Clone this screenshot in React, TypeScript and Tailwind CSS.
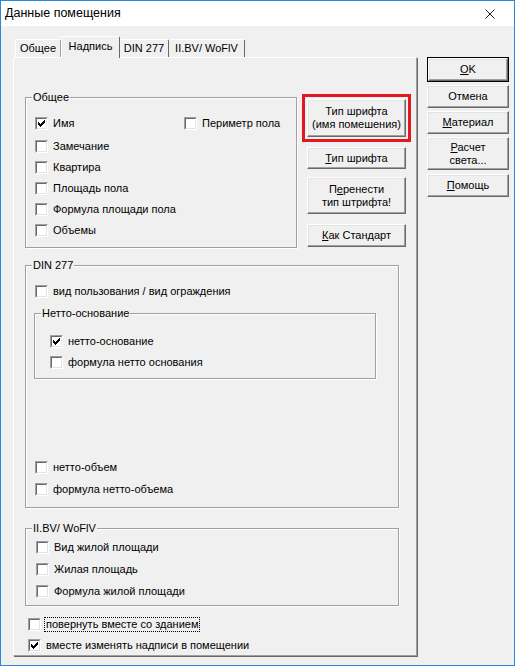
import React from "react";

// classic 3D bevels
const raised =
  "border border-t-white border-l-white border-r-[#696969] border-b-[#696969] shadow-[inset_-1px_-1px_0_#a0a0a0,inset_1px_1px_0_#e3e3e3] bg-[#f0f0f0]";

const CHECK_COLS = [5, 6, 7, 6, 5, 4, 3];

function Check({ on }: { on?: boolean }) {
  return (
    <span className="inline-block w-[13px] h-[13px] shrink-0 border border-t-[#a0a0a0] border-l-[#a0a0a0] border-r-white border-b-white">
      <span className="block w-full h-full bg-white border border-t-[#696969] border-l-[#696969] border-r-[#e3e3e3] border-b-[#e3e3e3]">
        {on && (
          <svg width="9" height="9" viewBox="2 2 9 9" shapeRendering="crispEdges" className="block">
            {CHECK_COLS.map((y, i) => (
              <rect key={i} x={3 + i} y={y} width="1" height="3" fill="#000" />
            ))}
          </svg>
        )}
      </span>
    </span>
  );
}

function Row({
  label,
  on,
  h = "h-[21px]",
  focus,
  className = "",
}: {
  label: string;
  on?: boolean;
  h?: string;
  focus?: boolean;
  className?: string;
}) {
  return (
    <div className={`flex items-center ${h} ${className}`}>
      <Check on={on} />
      {focus ? (
        <span className="ml-[4px] px-[1px] leading-[13px] outline outline-1 outline-dotted outline-black">
          {label}
        </span>
      ) : (
        <span className="ml-[5px] leading-[13px]">{label}</span>
      )}
    </div>
  );
}

function Group({
  title,
  className,
  children,
}: {
  title: string;
  className: string;
  children: React.ReactNode;
}) {
  return (
    <div
      className={`relative border border-[#a0a0a0] shadow-[inset_1px_1px_0_#fff,1px_1px_0_#fff] ${className}`}
    >
      <span className="absolute left-[6px] top-[-7px] px-[1px] leading-[13px] bg-[#f0f0f0]">
        {title}
      </span>
      {children}
    </div>
  );
}

function Btn({
  className = "",
  children,
}: {
  className?: string;
  children: React.ReactNode;
}) {
  return (
    <div
      className={`${raised} flex flex-col items-center justify-center text-center leading-[13px] ${className}`}
    >
      {children}
    </div>
  );
}

export default function App() {
  return (
    <div className="w-[515px] h-[666px] flex flex-col border border-[#2b88d8] bg-[#f0f0f0] text-black text-[11px] font-['Liberation_Sans',Arial,sans-serif] overflow-hidden">
      {/* title bar */}
      <div className="h-[25px] bg-white flex items-center justify-between pl-[4px] pr-[19px]">
        <span className="text-[12.5px]">Данные помещения</span>
        <svg width="10" height="10" viewBox="0 0 10 10" className="block">
          <path d="M0.5 0.5L9.5 9.5M9.5 0.5L0.5 9.5" stroke="#222" strokeWidth="1" />
        </svg>
      </div>

      <div className="flex pl-[12px] pt-[10px]">
        {/* tabs + panel */}
        <div className="w-[405px] flex flex-col">
          <div className="h-[21px] flex items-end pl-[2px]">
            <div className="w-[46px] h-[18px] flex items-center justify-center border-t border-l border-white border-r border-r-[#a0a0a0] rounded-t-[2px]">
              Общее
            </div>
            <div className="relative z-10 w-[59px] h-[22px] mb-[-1px] pb-[3px] flex items-center justify-center bg-[#f0f0f0] border-t border-l border-white border-r border-r-[#696969] rounded-t-[2px]">
              Надпись
            </div>
            <div className="w-[49px] h-[18px] flex items-center justify-center border-t border-white border-r border-r-[#696969] rounded-t-[2px]">
              DIN 277
            </div>
            <div className="w-[76px] h-[18px] flex items-center justify-center border-t border-white border-r border-r-[#696969] rounded-t-[2px]">
              II.BV/ WoFlV
            </div>
          </div>

          <div className="w-[404px] h-[599px] flex flex-col pl-[11px] pt-[36px] border-t border-l border-white border-r border-b border-r-[#a0a0a0] border-b-[#a0a0a0] shadow-[1px_1px_0_0_#696969] overflow-hidden">
            {/* row 1 */}
            <div className="flex items-start">
              <Group title="Общее" className="w-[272px] h-[151px] mt-[3px] pl-[9px] pt-[15px]">
                <div className="flex items-center h-[21px] mb-[2px]">
                  <div className="w-[149px]">
                    <Row label="Имя" on />
                  </div>
                  <Row label="Периметр пола" />
                </div>
                <Row label="Замечание" />
                <Row label="Квартира" />
                <Row label="Площадь пола" />
                <Row label="Формула площади пола" />
                <Row label="Объемы" />
              </Group>

              <div className="ml-[5px] flex flex-col">
                <div className="w-[109px] border-[3px] border-[#e1191f] p-[2px]">
                  <Btn className="h-[38px]">
                    <span>Тип шрифта</span>
                    <span>(имя помешения)</span>
                  </Btn>
                </div>
                <Btn className="ml-[5px] w-[99px] h-[22px] mt-[5px]">
                  <span>
                    <u>Т</u>ип шрифта
                  </span>
                </Btn>
                <Btn className="ml-[5px] w-[99px] h-[37px] mt-[8px]">
                  <span>
                    П<u>е</u>ренести
                  </span>
                  <span>тип штрифта!</span>
                </Btn>
                <Btn className="ml-[5px] w-[99px] h-[23px] mt-[10px]">
                  <span>
                    <u>К</u>ак Стандарт
                  </span>
                </Btn>
              </div>
            </div>

            {/* DIN 277 */}
            <Group title="DIN 277" className="w-[374px] h-[244px] mt-[17px] pt-[15px]">
              <Row label="вид пользования / вид ограждения" className="pl-[9px]" />
              <Group title="Нетто-основание" className="ml-[8px] mt-[11px] w-[342px] h-[66px] pl-[15px] pt-[17px]">
                <Row label="нетто-основание" on />
                <Row label="формула нетто основания" />
              </Group>
              <Row label="нетто-объем" h="h-[22px]" className="pl-[9px] mt-[77px]" />
              <Row label="формула нетто-объема" h="h-[22px]" className="pl-[9px]" />
            </Group>

            {/* II.BV / WoFlV */}
            <Group title="II.BV/ WoFlV" className="w-[374px] h-[78px] mt-[20px] pl-[10px] pt-[7px]">
              <Row label="Вид жилой площади" h="h-[22px]" />
              <Row label="Жилая площадь" h="h-[22px]" />
              <Row label="Формула жилой площади" h="h-[22px]" />
            </Group>

            <div className="pl-[3px] mt-[8px]">
              <Row label="повернуть вместе со зданием" focus />
              <Row label="вместе изменять надписи в помещении" on h="h-[20px]" />
            </div>
          </div>
        </div>

        {/* right buttons */}
        <div className="ml-[9px] mt-[21px] w-[82px] flex flex-col">
          <div className="h-[25px] border border-black">
            <Btn className="h-full">
              <span>
                <u>O</u>K
              </span>
            </Btn>
          </div>
          <Btn className="h-[23px] mt-[3px]">Отмена</Btn>
          <Btn className="h-[23px] mt-[3px]">
            <span>
              <u>М</u>атериал
            </span>
          </Btn>
          <Btn className="h-[33px] mt-[3px]">
            <span>
              <u>Р</u>асчет
            </span>
            <span>света...</span>
          </Btn>
          <Btn className="h-[23px] mt-[4px]">
            <span>
              <u>П</u>омощь
            </span>
          </Btn>
        </div>
      </div>
    </div>
  );
}
